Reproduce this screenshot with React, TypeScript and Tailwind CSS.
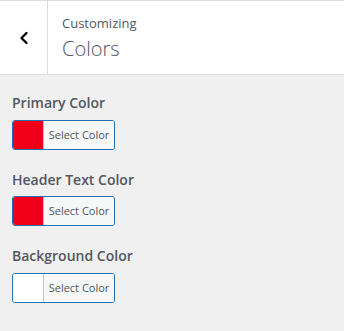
import { ChevronLeft } from "lucide-react";

const controls = [
  { label: "Primary Color", color: "#f00018" },
  { label: "Header Text Color", color: "#f00018" },
  { label: "Background Color", color: "#ffffff" },
];

function ColorControl({ label, color }: { label: string; color: string }) {
  return (
    <div className="mb-[18px]">
      <div className="text-[14px] font-semibold leading-[24.5px] text-[#50575e] mb-1">{label}</div>
      <button className="flex h-[30px] w-[103px] rounded-[3px] border border-[#2271b1] overflow-hidden">
        <span className="w-[30px] h-full" style={{ backgroundColor: color }} />
        <span className="flex-1 h-full bg-[#f6f7f7] border-l border-[#c3c4c7] text-[11px] leading-[28px] text-[#50575e] text-center">
          Select Color
        </span>
      </button>
    </div>
  );
}

export default function App() {
  return (
    <div className="w-[344px] h-[331px] bg-[#f0f0f1] font-['Open_Sans',sans-serif]">
      <div className="flex h-[75px] bg-white border-y border-[#dcdcde]">
        <button className="w-[48px] h-full flex items-center justify-center border-r border-[#dcdcde] text-black">
          <ChevronLeft size={20} strokeWidth={2.75} className="mt-[1px]" />
        </button>
        <div className="pl-[14px] pt-[10px]">
          <div className="text-[13px] leading-[24px] text-[#50575e]">Customizing</div>
          <div className="text-[20px] leading-[27px] font-extralight text-[#50575e]">Colors</div>
        </div>
      </div>
      <div className="px-3 pt-[16px]">
        {controls.map((c) => (
          <ColorControl key={c.label} label={c.label} color={c.color} />
        ))}
      </div>
    </div>
  );
}
